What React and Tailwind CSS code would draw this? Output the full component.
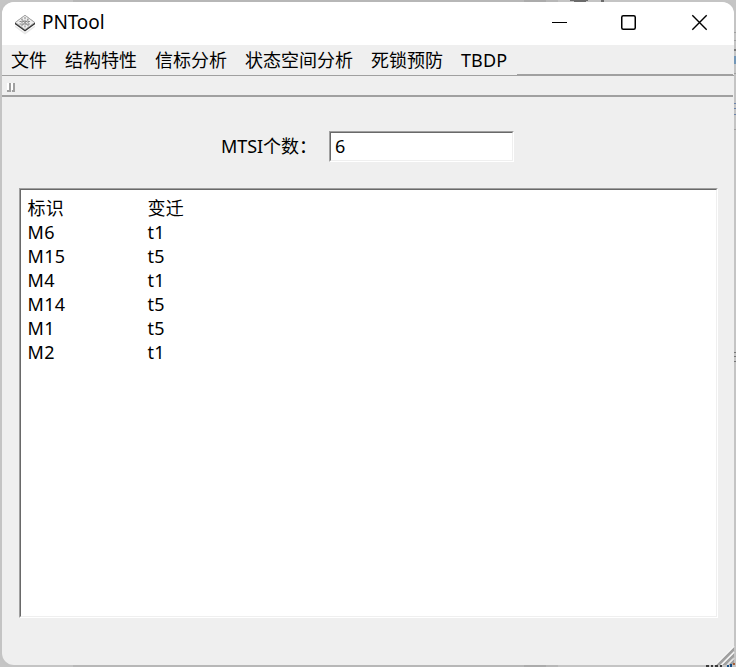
const menus = [
  { label: "文件", cls: "w-[54px]" },
  { label: "结构特性", cls: "w-[90px]" },
  { label: "信标分析", cls: "w-[90px]" },
  { label: "状态空间分析", cls: "w-[126px]" },
  { label: "死锁预防", cls: "w-[90px]" },
  { label: "TBDP", cls: "w-[56px] tracking-[0.1px]" },
];

const rows = [
  ["标识", "变迁"],
  ["M6", "t1"],
  ["M15", "t5"],
  ["M4", "t1"],
  ["M14", "t5"],
  ["M1", "t5"],
  ["M2", "t1"],
];

function AppIcon() {
  return (
    <svg width="24" height="24" viewBox="0 0 24 24" className="shrink-0">
      <path d="M2 13.5 12 20.500 22 13.500v1.500L12 22.500 2 15z" fill="#e6e6e6" />
      <path d="M2 10.5 12 3l10 7.500v1.700L12 19.500 2 12.200z" fill="#303030" />
      <path d="M2.300 10.500 12 3.300l9.700 7.200L12 17.600z" fill="#efefef" stroke="#a8a8a8" strokeWidth=".8" />
      <path d="M9 6.500v8M12 5v10.500M15 6.500v8M6.500 9.500h11M6.500 12h11M9 7.500l6 6M15 7.500l-6 6" stroke="#858585" strokeWidth="1" strokeDasharray="2 .8" />
    </svg>
  );
}

function TitleBar() {
  return (
    <div className="flex h-[43px] shrink-0 items-center bg-white pl-[11px]">
      <AppIcon />
      <span className="-mt-[3px] ml-[5px] text-[19px] leading-[24px] tracking-[-0.1px]">PNTool</span>
      <div className="ml-auto flex h-full">
        <svg width="70" height="43" viewBox="0 0 70 43" fill="none" stroke="#000">
          <path d="M28 20.5h15" strokeWidth="1" />
        </svg>
        <svg width="70" height="43" viewBox="0 0 70 43" fill="none" stroke="#000">
          <rect x="27.75" y="13.75" width="13.5" height="13.5" rx="1.5" strokeWidth="1.5" />
        </svg>
        <svg width="70" height="43" viewBox="0 0 70 43" fill="none" stroke="#000">
          <path d="m28.300 13.300 14.400 14.400m0-14.400L28.300 27.700" strokeWidth="1.4" />
        </svg>
      </div>
    </div>
  );
}

function DesktopEdges() {
  return (
    <svg width="736" height="667" viewBox="0 0 736 667" className="absolute inset-0" shapeRendering="crispEdges">
      <path d="M0 0h736v667H0z" fill="#c5c5c5" />
      <path d="M73 0h485v2H73zM73 665h485v2H73z" fill="#b5b5b5" />
      <path d="M524 0h22v2h-22zM524 665h22v2h-22z" fill="#a5a5a5" />
      <path d="M570 0h18v1h-18zM574 1h12v1h-12zM601 0h3v2h-3z" fill="#555" />
      <path d="M734 32h2v1h-2zM734 40h2v1h-2zM734 73h2v1h-2zM734 129h2v1h-2z" fill="#999" />
      <path d="M734 49h2v2h-2z" fill="#666" />
      <path d="M734 56h2v8h-2z" fill="#5f8db5" />
      <path d="M734 103h2v1h-2zM734 108h2v1h-2zM734 114h2v1h-2z" fill="#5875a5" />
      <path d="M734 352h2v1h-2zM734 356h2v1h-2zM734 361h2v1h-2z" fill="#666" />
    </svg>
  );
}

function ResizeGrip() {
  return (
    <svg width="30" height="22" viewBox="0 0 30 22" className="absolute right-0 bottom-0">
      <g fill="#a0a0a0">
        <path d="M10 20 28 2v4L14 20zM16 20 28 8v4L20 20zM22 20l6-6v4l-2 2z" />
      </g>
      <path d="M9.500 20 28 1.500M15.500 20 28 7.500M21.500 20l6.500-6.500" fill="none" stroke="#fff" />
      <path d="M0 20h3v2H0zM5 20h2v2H5zM9 20h3v2H9zM14 20h2v2h-2z" fill="#3a3a3a" />
      <path d="M21 20h2v2h-2zM24 19h2v3h-2z" fill="#174d83" />
      <path d="M27 18h2v2h-2z" fill="#a55f39" />
    </svg>
  );
}

export default function App() {
  return (
    <div className="relative h-[667px] w-[736px] overflow-hidden p-[2px] font-['Noto_Sans','Noto_Sans_CJK_SC',sans-serif] text-[18px] text-black">
      <DesktopEdges />
      <main className="relative flex h-[663px] w-[732px] flex-col overflow-hidden rounded-[12px] bg-[#efefef]">
        <TitleBar />
        <nav className="relative flex h-[31px] shrink-0 border-b border-[#a0a0a0] pl-[9px]">
          {menus.map((menu) => (
            <span key={menu.label} className={`${menu.cls} h-[30px] shrink-0 whitespace-nowrap leading-[30px]`}>
              {menu.label}
            </span>
          ))}
          <span className="mr-px h-px flex-1 self-end bg-[#a0a0a0]" />
        </nav>
        <div className="mr-px flex h-[21px] shrink-0 items-center border-b-2 border-[#a0a0a0] pl-[5px]">
          <svg width="9" height="9" viewBox="0 0 9 9" shapeRendering="crispEdges" className="mt-[3px]">
            <path d="M2 0h2v9H0V7h2zM6 0h2v9H5V7h1z" fill="#a0a0a0" />
            <path d="M0 0h2v7H0zM4 0h2v7H4z" fill="#fff" />
          </svg>
        </div>
        <div className="mt-[34px] flex h-[31px] shrink-0 items-center pl-[219px]">
          <label htmlFor="count" className="-mt-[2px] w-[108px] shrink-0 whitespace-nowrap leading-[30px]">
            <span className="tracking-[-0.1px]">MTSI</span>个数：
          </label>
          <div className="h-[31px] w-[185px] border-t border-r border-b border-l border-t-[#a0a0a0] border-r-white border-b-white border-l-[#a0a0a0]">
            <input
              id="count"
              readOnly
              value="6"
              className="block h-[29px] w-[183px] border border-t-[#696969] border-r-[#efefef] border-b-[#efefef] border-l-[#696969] bg-white pb-[2px] pl-[4px] text-[18px] outline-none"
            />
          </div>
        </div>
        <section className="mt-[26px] ml-[17px] h-[430px] w-[699px] shrink-0 border border-t-[#a0a0a0] border-r-white border-b-white border-l-[#a0a0a0]">
          <div className="h-full border border-t-[#696969] border-r-[#efefef] border-b-[#efefef] border-l-[#696969] bg-white pt-[6px] pl-[6.5px]">
            {rows.map(([mark, transition]) => (
              <div key={mark} className="grid h-[24px] grid-cols-[120px_1fr] leading-[24px] tracking-[0.3px]">
                <span>{mark}</span>
                <span>{transition}</span>
              </div>
            ))}
          </div>
        </section>
      </main>
      <div className="pointer-events-none absolute inset-0 rounded-[13px] border-2 border-[#c5c5c5]/20" />
      <ResizeGrip />
    </div>
  );
}
